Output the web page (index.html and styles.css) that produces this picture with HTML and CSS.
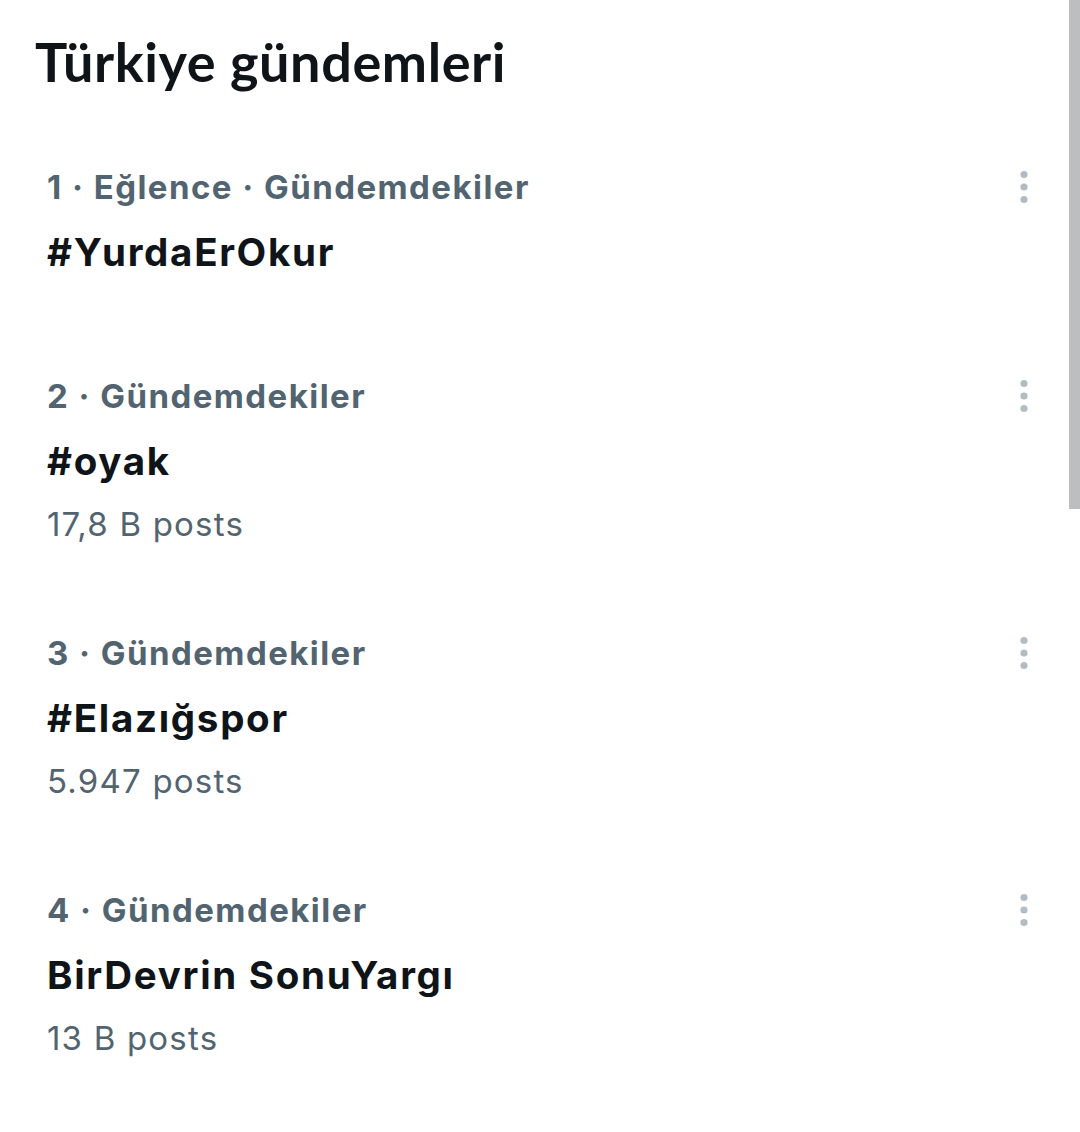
FILE: index.html
```html
<!DOCTYPE html>
<html lang="tr">
<head>
<meta charset="utf-8">
<title>Türkiye gündemleri</title>
<link rel="stylesheet" href="styles.css">
</head>
<body>
<main class="page">
  <h1 class="title">Türkiye gündemleri</h1>
  <ul class="trends">
    <li class="trend trend--short">
      <div class="trend-body">
        <div class="meta">1 · Eğlence · Gündemdekiler</div>
        <div class="name">#YurdaErOkur</div>
      </div>
      <button class="more" aria-label="Diğer"><svg viewBox="0 0 24 40" width="24" height="40"><circle cx="12" cy="7.5" r="3.6"/><circle cx="12" cy="20" r="3.6"/><circle cx="12" cy="32.5" r="3.6"/></svg></button>
    </li>
    <li class="trend">
      <div class="trend-body">
        <div class="meta">2 · Gündemdekiler</div>
        <div class="name">#oyak</div>
        <div class="posts">17,8 B posts</div>
      </div>
      <button class="more" aria-label="Diğer"><svg viewBox="0 0 24 40" width="24" height="40"><circle cx="12" cy="7.5" r="3.6"/><circle cx="12" cy="20" r="3.6"/><circle cx="12" cy="32.5" r="3.6"/></svg></button>
    </li>
    <li class="trend">
      <div class="trend-body">
        <div class="meta">3 · Gündemdekiler</div>
        <div class="name">#Elazığspor</div>
        <div class="posts">5.947 posts</div>
      </div>
      <button class="more" aria-label="Diğer"><svg viewBox="0 0 24 40" width="24" height="40"><circle cx="12" cy="7.5" r="3.6"/><circle cx="12" cy="20" r="3.6"/><circle cx="12" cy="32.5" r="3.6"/></svg></button>
    </li>
    <li class="trend">
      <div class="trend-body">
        <div class="meta">4 · Gündemdekiler</div>
        <div class="name">BirDevrin SonuYargı</div>
        <div class="posts">13 B posts</div>
      </div>
      <button class="more" aria-label="Diğer"><svg viewBox="0 0 24 40" width="24" height="40"><circle cx="12" cy="7.5" r="3.6"/><circle cx="12" cy="20" r="3.6"/><circle cx="12" cy="32.5" r="3.6"/></svg></button>
    </li>
  </ul>
  <div class="scroll-thumb"></div>
</main>
</body>
</html>
```

FILE: styles.css
```css
* { box-sizing: border-box; }

html, body {
  margin: 0;
  padding: 0;
  background: #ffffff;
  overflow: hidden;
}

body {
  font-family: Inter, "Noto Sans", "DejaVu Sans", sans-serif;
  color: #0f1419;
}

.page {
  position: relative;
  width: 1080px;
  height: 1132px;
  padding-right: 11px;
  padding-top: 30px;
}

.title {
  margin: 0 0 28px 0;
  padding-left: 35px;
  font-family: Lato, Inter, sans-serif;
  font-size: 54px;
  line-height: 64px;
  font-weight: 700;
  letter-spacing: 0.6px;
  color: #0f1419;
}

.trends {
  list-style: none;
  margin: 0;
  padding: 0;
}

.trend {
  display: flex;
  align-items: flex-start;
  justify-content: space-between;
  padding: 43px 33px 43px 47px;
}

.trend--short {
  padding-bottom: 58px;
}

.trend-body {
  display: flex;
  flex-direction: column;
}

.meta {
  font-size: 33px;
  line-height: 44px;
  font-weight: 700;
  letter-spacing: 1.45px;
  color: #536471;
}

.name {
  margin-top: 22px;
  font-size: 38.5px;
  line-height: 42px;
  font-weight: 700;
  letter-spacing: 1.7px;
  color: #0f1419;
}

.posts {
  margin-top: 21px;
  font-size: 33px;
  line-height: 42px;
  font-weight: 400;
  letter-spacing: 1.2px;
  color: #536471;
}

.more {
  border: 0;
  background: none;
  padding: 0;
  margin: 2px 0 0 0;
  width: 24px;
  height: 40px;
  display: flex;
}

.more svg {
  fill: #b4bcc3;
}

.scroll-thumb {
  position: absolute;
  top: 0;
  right: 0;
  width: 11px;
  height: 509px;
  background: #bdbebf;
}
```
